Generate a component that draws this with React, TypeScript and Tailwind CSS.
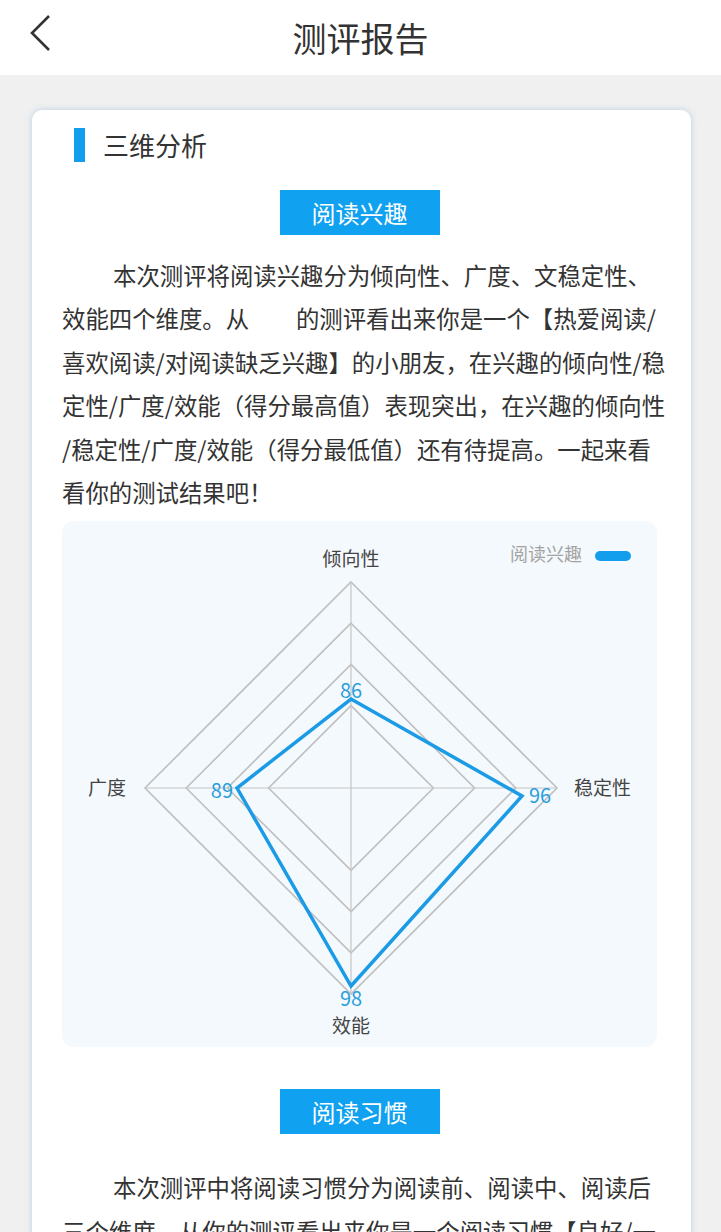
import React from 'react';

const R = 206;
const CX = 289;
const CY = 267;

function diamond(r: number) {
  return `${CX},${CY - r} ${CX + r},${CY} ${CX},${CY + r} ${CX - r},${CY}`;
}

function RadarChart() {
  const rings = [0.4, 0.6, 0.8, 1].map((f) => f * R);
  return (
    <div className="mt-[7px] h-[526px] w-[595px] rounded-xl bg-[#f4f9fd]">
      <svg width="595" height="526" viewBox="0 0 595 526">
        {rings.map((r) => (
          <polygon key={r} points={diamond(r)} fill="none" stroke="#bfbfbf" strokeWidth="1.6" />
        ))}
        <line x1={CX} y1={CY - R} x2={CX} y2={CY + R} stroke="#c4c4c4" strokeWidth="1.2" />
        <line x1={CX - R} y1={CY} x2={CX + R} y2={CY} stroke="#c4c4c4" strokeWidth="1.2" />
        <polygon
          points="289,178 460,275 289,465 175,267"
          fill="none"
          stroke="#1b9be5"
          strokeWidth="3.5"
          strokeLinejoin="miter"
        />

        <g fill="#444" fontSize="19">
          <text x="289" y="45" textAnchor="middle">倾向性</text>
          <text x="64" y="274" textAnchor="end">广度</text>
          <text x="512" y="274">稳定性</text>
          <text x="289" y="512" textAnchor="middle">效能</text>
        </g>

        <g fill="#2a9fdc" fontSize="20">
          <text x="289" y="177" textAnchor="middle">86</text>
          <text x="171" y="277" textAnchor="end">89</text>
          <text x="467" y="282">96</text>
          <text x="289" y="485" textAnchor="middle">98</text>
        </g>

        <text x="520" y="40" textAnchor="end" fill="#a3a3a3" fontSize="18">阅读兴趣</text>
        <rect x="533" y="30" width="36" height="10" rx="5" fill="#139ded" />
      </svg>
    </div>
  );
}

function TagButton({ label }: { label: string }) {
  return (
    <div className="flex justify-center">
      <div className="flex h-[45px] w-[160px] items-center justify-center bg-[#10a1f0] text-[24px] text-white">
        {label}
      </div>
    </div>
  );
}

export default function App() {
  return (
    <div className="min-h-[1232px] bg-[#f0f0f0] font-['Noto_Sans_CJK_SC','Noto_Sans',sans-serif] text-[#333]">
      {/* header */}
      <div className="relative flex h-[75px] items-center justify-center bg-white">
        <button className="absolute left-[28px] top-[14px] p-0">
          <svg width="26" height="38" viewBox="0 0 26 38">
            <polyline points="21,2 4,19 21,36" fill="none" stroke="#333" strokeWidth="2.6" />
          </svg>
        </button>
        <h1 className="text-[34px] leading-none text-[#333]">测评报告</h1>
      </div>

      {/* card */}
      <div className="ml-[32px] mt-[35px] w-[659px] rounded-t-[10px] bg-white pb-10 pl-[30px] pr-[34px] pt-[18px] shadow-[0_0_6px_rgba(140,180,215,0.55)]">
        <div className="flex items-center pl-[12px]">
          <div className="h-[34px] w-[11px] bg-[#139ded]" />
          <h2 className="ml-[18px] text-[26px] leading-none text-[#333]">三维分析</h2>
        </div>

        <div className="mt-[28px]">
          <TagButton label="阅读兴趣" />
        </div>

        <p className="mt-[19px] whitespace-nowrap text-[23.4px] leading-[43.4px] [text-indent:51px]">
          本次测评将阅读兴趣分为倾向性、广度、文稳定性、
          <br />
          效能四个维度。从　　的测评看出来你是一个【热爱阅读/
          <br />
          喜欢阅读/对阅读缺乏兴趣】的小朋友，在兴趣的倾向性/稳
          <br />
          定性/广度/效能（得分最高值）表现突出，在兴趣的倾向性
          <br />
          /稳定性/广度/效能（得分最低值）还有待提高。一起来看
          <br />
          看你的测试结果吧！
        </p>

        <RadarChart />

        <div className="mt-[42px]">
          <TagButton label="阅读习惯" />
        </div>

        <p className="mt-[32px] whitespace-nowrap text-[23.4px] leading-[43.4px] [text-indent:51px]">
          本次测评中将阅读习惯分为阅读前、阅读中、阅读后
          <br />
          三个维度，从你的测评看出来你是一个阅读习惯【良好/一
          <br />
          般/较差】的小朋友，在阅读前/阅读中/阅读后（得分最
          <br />
          高值）表现突出，还有待提高。一起来看看你的测试结果吧！
        </p>
      </div>
    </div>
  );
}
